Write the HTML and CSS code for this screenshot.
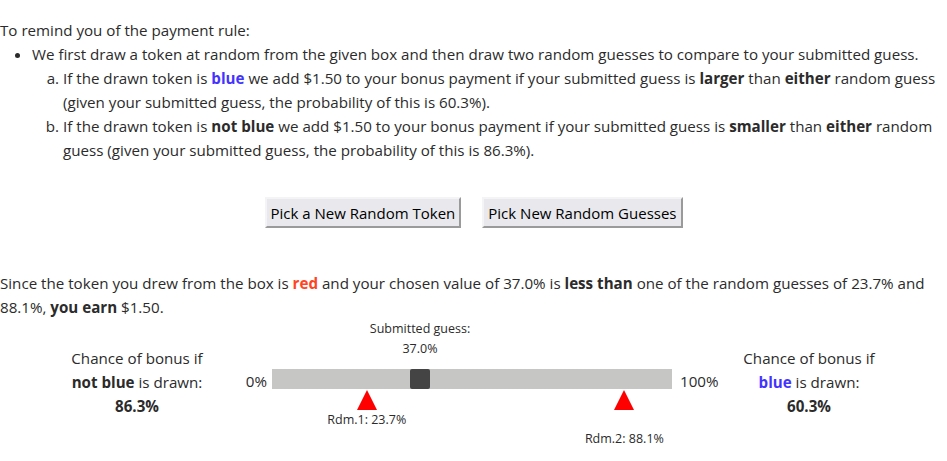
FILE: index.html
```html
<!DOCTYPE html>
<html>
<head>
<meta charset="utf-8">
<link rel="stylesheet" href="styles.css">
</head>
<body>
<div class="page">
  <p class="intro">To remind you of the payment rule:</p>
  <ul class="rules">
    <li>We first draw a token at random from the given box and then draw two random guesses to compare to your submitted guess.
      <ol class="cases">
        <li>If the drawn token is <b class="blue">blue</b> we add $1.50 to your bonus payment if your submitted guess is <b>larger</b> than <b>either</b> random guess (given your submitted guess, the probability of this is 60.3%).</li>
        <li>If the drawn token is <b>not blue</b> we add $1.50 to your bonus payment if your submitted guess is <b>smaller</b> than <b>either</b> random guess (given your submitted guess, the probability of this is 86.3%).</li>
      </ol>
    </li>
  </ul>
  <div class="buttons">
    <button class="btn">Pick a New Random Token</button>
    <button class="btn">Pick New Random Guesses</button>
  </div>
  <p class="result">Since the token you drew from the box is <b class="red">red</b> and your chosen value of 37.0% is <b>less than</b> one of the random guesses of 23.7% and 88.1%, <b>you earn</b> $1.50.</p>
  <div class="slider-row">
    <div class="panel left-panel">Chance of bonus if<br><b>not blue</b> is drawn:<br><b>86.3%</b></div>
    <div class="end-label zero">0%</div>
    <div class="slider">
      <div class="guess-label" style="left:37%">Submitted guess:<br>37.0%</div>
      <div class="track"><div class="thumb" style="left:37%"></div></div>
      <div class="marker" style="left:23.7%"></div>
      <div class="rdm rdm1" style="left:23.7%">Rdm.1: 23.7%</div>
      <div class="marker" style="left:88.1%"></div>
      <div class="rdm rdm2" style="left:88.1%">Rdm.2: 88.1%</div>
    </div>
    <div class="end-label hundred">100%</div>
    <div class="panel right-panel">Chance of bonus if<br><b class="blue">blue</b> is drawn:<br><b>60.3%</b></div>
  </div>
</div>
</body>
</html>
```

FILE: styles.css
```css
html, body {
  margin: 0;
  padding: 0;
  background: #fff;
}
.page {
  font-family: "Open Sans", "Noto Sans", sans-serif;
  font-size: 15.15px;
  line-height: 24px;
  color: #2b2b2b;
}
.intro {
  margin: 18px 0 0 0;
}
.rules {
  margin: 0;
  padding-left: 32px;
}
.cases {
  list-style-type: lower-alpha;
  margin: 0;
  padding-left: 31px;
}
.blue { color: #4433ff; }
.red { color: #ff4422; }
b { font-weight: 700; }
.buttons {
  display: flex;
  justify-content: center;
  gap: 21px;
  margin-top: 35px;
}
.btn {
  font-family: inherit;
  font-size: 15px;
  color: #000;
  background: #e9e9ed;
  border: 2px solid;
  border-color: #f4f4f6 #9a9a9a #9a9a9a #f4f4f6;
  height: 31px;
  padding: 0 4px;
  margin: 0;
}
.result {
  margin: 43px 0 0 0;
}
.slider-row {
  display: flex;
  align-items: flex-start;
  height: 142px;
}
.panel {
  text-align: center;
  margin-top: 27px;
}
.left-panel {
  width: 214px;
  margin-left: 30px;
}
.end-label {
  padding-top: 50px;
}
.zero {
  width: 23px;
  text-align: right;
  margin-right: 5px;
}
.hundred {
  margin-left: 8px;
  width: 39px;
}
.right-panel {
  width: 180px;
}
.slider {
  position: relative;
  width: 400px;
  height: 142px;
  font-size: 12.5px;
  line-height: 20px;
}
.track {
  position: absolute;
  left: 0;
  right: 0;
  top: 50px;
  height: 20px;
  background: #c6c6c5;
}
.thumb {
  position: absolute;
  top: 0;
  width: 20px;
  height: 20px;
  margin-left: -10px;
  background: #444;
  border-radius: 2px;
}
.guess-label {
  position: absolute;
  top: 0;
  transform: translateX(-50%);
  text-align: center;
  white-space: nowrap;
}
.marker {
  position: absolute;
  top: 71px;
  width: 0;
  height: 0;
  margin-left: -10px;
  border-left: 10px solid transparent;
  border-right: 10px solid transparent;
  border-bottom: 20px solid #ff0000;
}
.rdm {
  position: absolute;
  transform: translateX(-50%);
  white-space: nowrap;
}
.rdm1 { top: 91px; }
.rdm2 { top: 110px; }
```
